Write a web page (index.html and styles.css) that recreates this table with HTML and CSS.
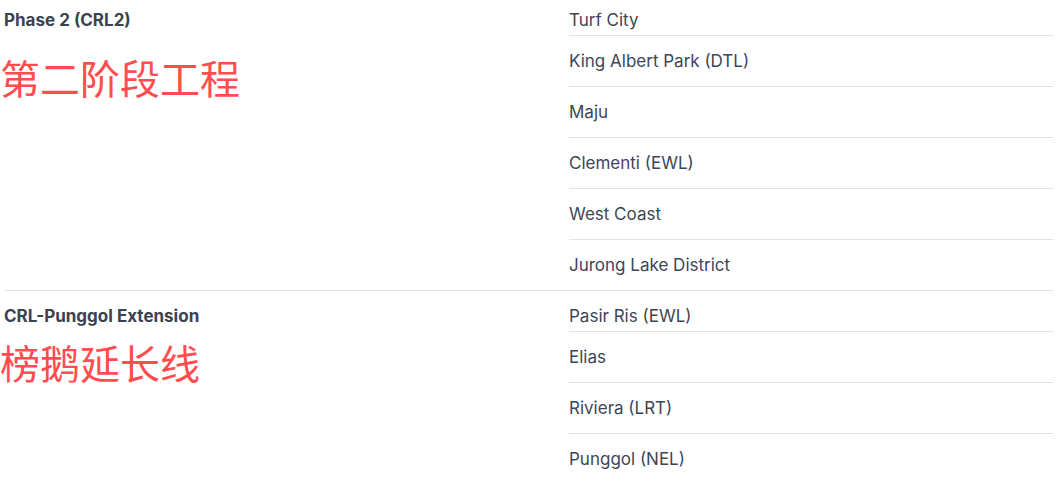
FILE: index.html
```html
<!DOCTYPE html>
<html lang="en">
<head>
<meta charset="utf-8">
<link rel="stylesheet" href="styles.css">
</head>
<body>
<div class="table">
  <section class="group group-first">
    <div class="label">
      <h3 class="phase">Phase 2 (CRL2)</h3>
      <p class="note note-first">第二阶段工程</p>
    </div>
    <ul class="stations">
      <li>Turf City</li>
      <li>King Albert Park (DTL)</li>
      <li>Maju</li>
      <li>Clementi (EWL)</li>
      <li>West Coast</li>
      <li>Jurong Lake District</li>
    </ul>
  </section>
  <section class="group">
    <div class="label">
      <h3 class="phase">CRL-Punggol Extension</h3>
      <p class="note note-second">榜鹅延长线</p>
    </div>
    <ul class="stations">
      <li>Pasir Ris (EWL)</li>
      <li>Elias</li>
      <li>Riviera (LRT)</li>
      <li>Punggol (NEL)</li>
    </ul>
  </section>
</div>
</body>
</html>
```
FILE: styles.css
```css
html, body {
  margin: 0;
  padding: 0;
  background: #ffffff;
}
body {
  font-family: "Inter", "Noto Sans", sans-serif;
  color: #3e4655;
  overflow: hidden;
}
.table {
  margin: -6px 7px 0 4px;
}
.group {
  display: grid;
  grid-template-columns: 565px 1fr;
  padding-top: 10px;
}
.group + .group {
  border-top: 1px solid #e3e3e3;
  padding-top: 9px;
}
.label {
  padding-top: 6px;
}
.phase {
  margin: 0;
  font-size: 17px;
  line-height: 20px;
  font-weight: 700;
  color: #3a4252;
}
.note {
  margin: 0 0 0 -4px;
  font-family: "Noto Sans CJK SC", sans-serif;
  font-size: 40px;
  line-height: 48px;
  color: #ff4d4f;
}
.note-first {
  margin-top: 23px;
}
.note-second {
  margin-top: 12px;
}
.stations {
  list-style: none;
  margin: 0;
  padding: 0;
}
.stations li {
  font-size: 17px;
  line-height: 20px;
  padding: 15px 0;
  border-bottom: 1px solid #e3e3e3;
}
.stations li:first-child {
  padding-top: 6px;
  padding-bottom: 5px;
}
.stations li:last-child {
  border-bottom: none;
}
```
